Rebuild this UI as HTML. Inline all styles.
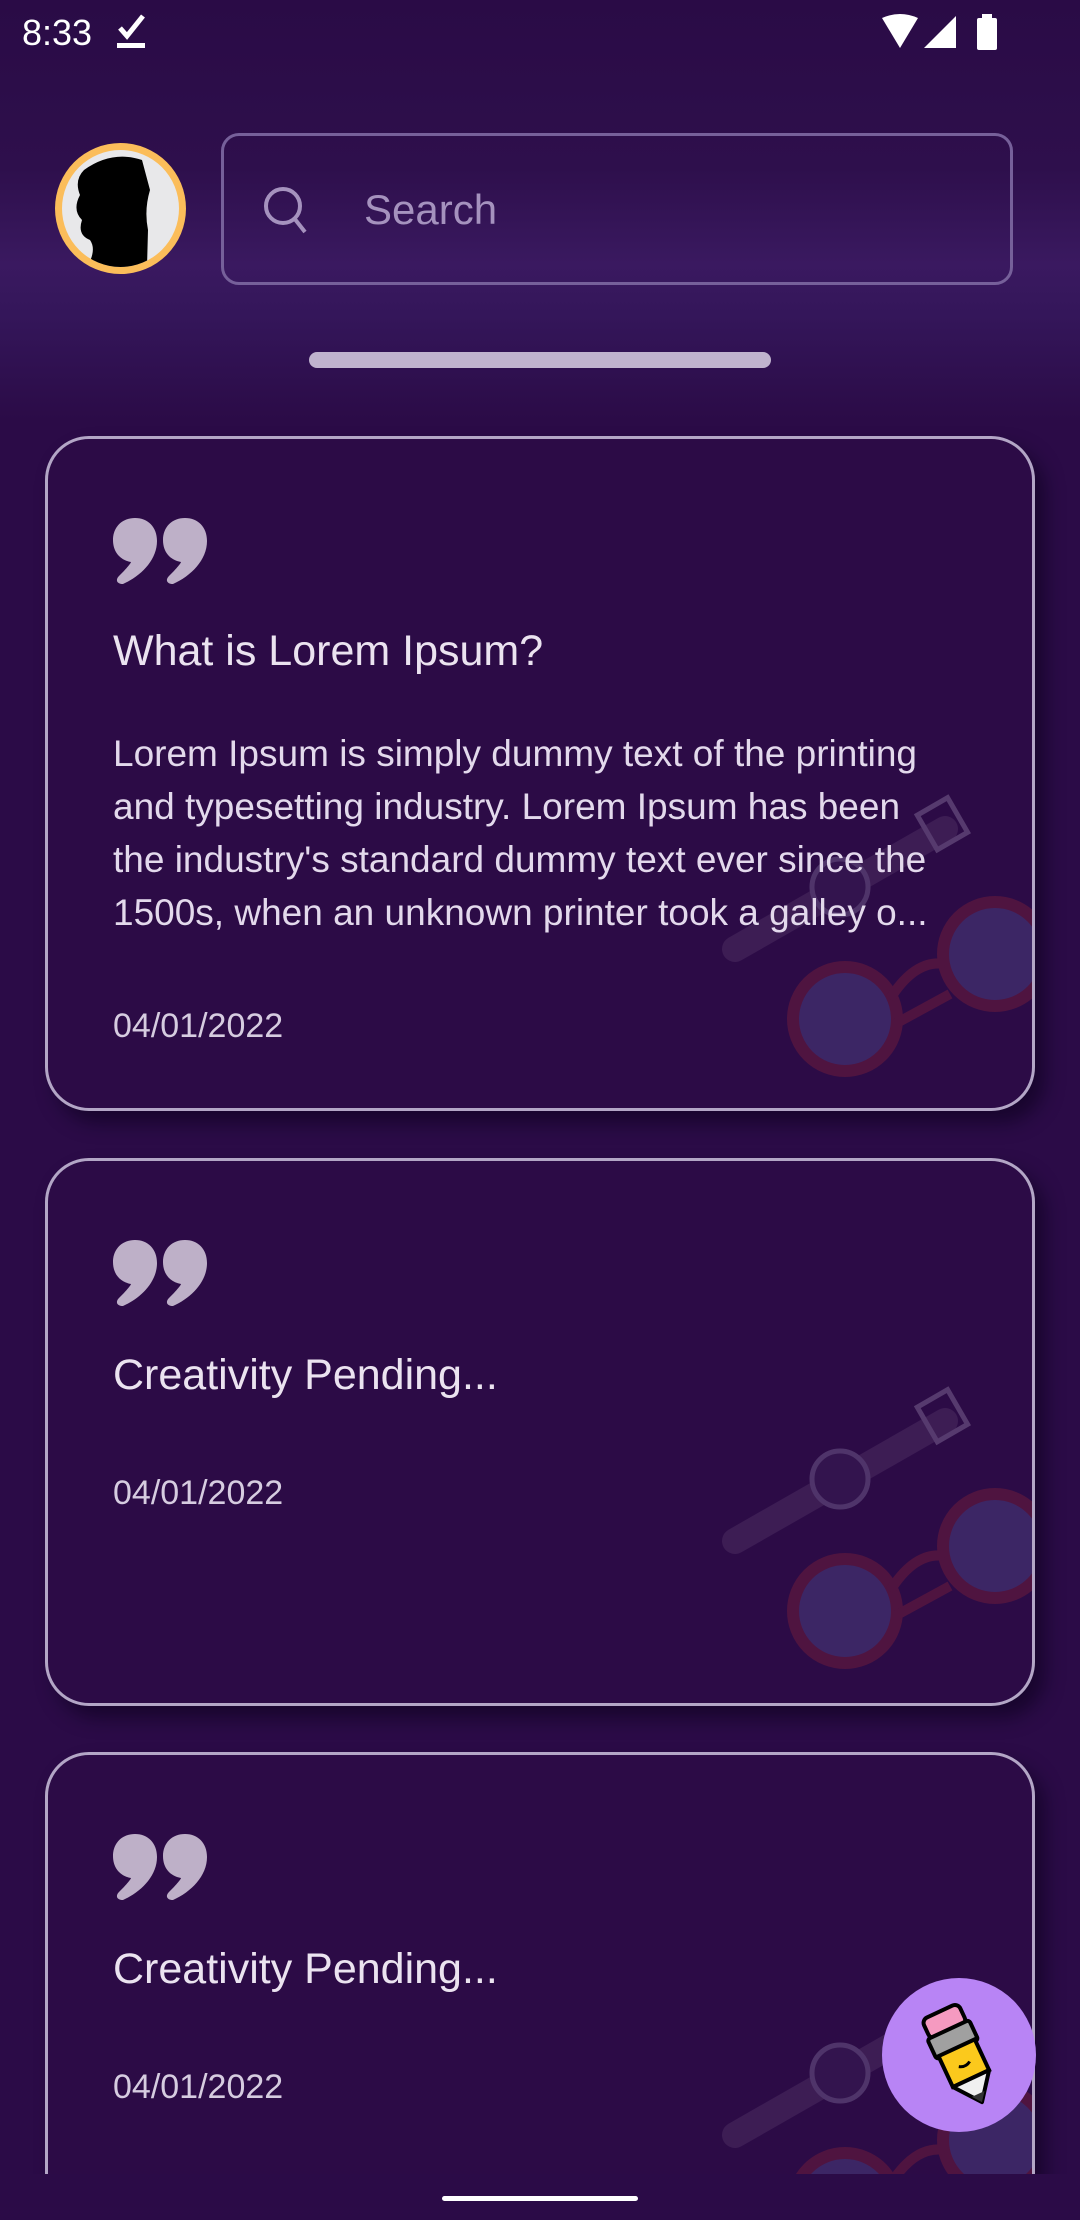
<!DOCTYPE html>
<html><head><meta charset="utf-8"><style>
*{margin:0;padding:0;box-sizing:border-box}
body{width:1080px;height:2220px;overflow:hidden;background:#2b0b47;font-family:"Liberation Sans",sans-serif;position:relative}
.hdr{position:absolute;left:0;top:0;width:1080px;height:420px;background:linear-gradient(#2a0b46 0%,#2e0f4c 40%,#3a1960 63%,#34165a 75%,#2b0b47 100%)}
.abs{position:absolute}
.clip{position:absolute;left:0;top:0;width:1080px;height:2174px;overflow:hidden}
.card{position:absolute;left:45px;width:990px;border:3px solid #b3a6c6;border-radius:44px;background:#2c0b46;box-shadow:10px 12px 18px rgba(10,0,25,.55);overflow:hidden}
.q{position:absolute;left:65px;top:79px}
.t{position:absolute;left:65px;color:#ebe3f0;font-size:43px;white-space:nowrap}
.b{position:absolute;left:65px;top:288px;color:#e3d9ec;font-size:37px;line-height:53px;white-space:nowrap}
.d{position:absolute;left:65px;color:#d6cce0;font-size:34px}
.deco{position:absolute;right:-3px;opacity:.55}
</style></head><body>
<div class="hdr"></div>
<!-- status bar -->
<div class="abs" style="left:22px;top:12px;color:#fff;font-size:36px">8:33</div>
<svg class="abs" style="left:116px;top:14px" width="32" height="38" viewBox="0 0 32 38"><path d="M4 14l7 8 16-20" stroke="#fff" stroke-width="5" fill="none"/><rect x="1" y="29" width="28" height="5" fill="#fff"/></svg>
<svg class="abs" style="left:880px;top:14px" width="120" height="38" viewBox="0 0 120 38"><path d="M2 4 Q20 -4 38 4 L20 34 Z" fill="#fff"/><path d="M44 34 L76 2 V34 Z" fill="#fff"/><rect x="97" y="4" width="20" height="32" rx="2" fill="#fff"/><rect x="102" y="0" width="10" height="6" fill="#fff"/></svg>
<!-- avatar -->
<div class="abs" style="left:55px;top:143px;width:131px;height:131px;border-radius:50%;background:#fbbd5a;padding:7px">
<div style="width:100%;height:100%;border-radius:50%;background:#e8e8ea;overflow:hidden;position:relative">
<svg width="117" height="117" viewBox="0 0 117 117" style="position:absolute;left:0;top:0"><path d="M22 20 Q50 0 80 10 L88 40 Q82 60 86 80 L85 117 H25 Q35 100 28 90 Q15 85 20 70 Q10 60 18 45 Q12 30 22 20Z" fill="#000"/></svg></div></div>
<!-- search -->
<div class="abs" style="left:221px;top:133px;width:792px;height:152px;border:3px solid #76609a;border-radius:18px"></div>
<svg class="abs" style="left:262px;top:185px" width="50" height="50" viewBox="0 0 50 50"><circle cx="21" cy="21" r="17" stroke="#a592be" stroke-width="4" fill="none"/><path d="M32 33 L43 47" stroke="#a592be" stroke-width="4"/></svg>
<div class="abs" style="left:364px;top:186px;color:#a592be;font-size:42px">Search</div>
<div class="abs" style="left:309px;top:352px;width:462px;height:16px;border-radius:8px;background:#c0b3ce"></div>

<svg width="0" height="0" style="position:absolute"><defs>
<g id="qq"><path d="M22 0 C35 0 44 9 44 23 C44 42 28 58 10 66 C4 66 2 62 6 58 C14 50 18 45 18 44 C7 42 0 34 0 22 C0 9 9 0 22 0Z" fill="#beb0c8"/></g>
<g id="dec">
<path d="M20 160 L230 40" stroke="#4b2c60" stroke-width="26" stroke-linecap="round"/>
<rect x="210" y="15" width="35" height="40" transform="rotate(-30 227 35)" fill="none" stroke="#7a6290" stroke-width="5"/>
<circle cx="125" cy="98" r="28" fill="#3a1d55" stroke="#6d5788" stroke-width="5"/>
<circle cx="130" cy="230" r="52" fill="#4a3d80" stroke="#6c1c3c" stroke-width="12"/>
<circle cx="280" cy="165" r="52" fill="#4a3d80" stroke="#6c1c3c" stroke-width="12"/>
<path d="M175 210 Q200 170 230 175" stroke="#6c1c3c" stroke-width="10" fill="none"/>
<path d="M180 235 L235 205" stroke="#6c1c3c" stroke-width="10"/>
</g></defs></svg>

<div class="clip">
<!-- card 1 -->
<div class="card" style="top:436px;height:675px">
<svg class="q" width="96" height="68" viewBox="0 0 96 68"><use href="#qq"/><use href="#qq" x="50"/></svg>
<div class="t" style="top:188px">What is Lorem Ipsum?</div>
<svg class="deco" style="top:350px" width="320" height="300" viewBox="0 0 320 300"><use href="#dec"/></svg>
<div class="b">Lorem Ipsum is simply dummy text of the printing<br>and typesetting industry. Lorem Ipsum has been<br>the industry's standard dummy text ever since the<br>1500s, when an unknown printer took a galley o...</div>
<div class="d" style="top:568px">04/01/2022</div>
</div>
<!-- card 2 -->
<div class="card" style="top:1158px;height:548px">
<svg class="q" width="96" height="68" viewBox="0 0 96 68"><use href="#qq"/><use href="#qq" x="50"/></svg>
<div class="t" style="top:190px">Creativity Pending...</div>
<div class="d" style="top:313px">04/01/2022</div>
<svg class="deco" style="top:220px" width="320" height="300" viewBox="0 0 320 300"><use href="#dec"/></svg>
</div>
<!-- card 3 -->
<div class="card" style="top:1752px;height:548px">
<svg class="q" width="96" height="68" viewBox="0 0 96 68"><use href="#qq"/><use href="#qq" x="50"/></svg>
<div class="t" style="top:190px">Creativity Pending...</div>
<div class="d" style="top:313px">04/01/2022</div>
<svg class="deco" style="top:220px" width="320" height="300" viewBox="0 0 320 300"><use href="#dec"/></svg>
</div>
</div>
<!-- bottom nav -->
<div class="abs" style="left:0;top:2174px;width:1080px;height:46px;background:#2b0b47"></div>
<div class="abs" style="left:442px;top:2196px;width:196px;height:5px;border-radius:3px;background:#fff"></div>
<!-- FAB -->
<div class="abs" style="left:882px;top:1978px;width:154px;height:154px;border-radius:50%;background:#b884f5"></div>
<svg class="abs" style="left:900px;top:1995px" width="120" height="120" viewBox="0 0 120 120">
<g transform="rotate(-25 60 60)">
<rect x="40" y="12" width="40" height="22" rx="6" fill="#f59ac0" stroke="#000" stroke-width="4"/>
<rect x="37" y="32" width="46" height="22" rx="3" fill="#a0a0a0" stroke="#000" stroke-width="4"/>
<rect x="40" y="52" width="40" height="34" fill="#fbc91c" stroke="#000" stroke-width="4"/>
<path d="M40 86 L60 112 L80 86 Z" fill="#f0f0f0" stroke="#000" stroke-width="4" stroke-linejoin="round"/>
<path d="M53 103 L60 112 L67 103Z" fill="#333"/>
<path d="M54 70 Q60 74 66 70" stroke="#000" stroke-width="3" fill="none"/>
</g></svg>
</body></html>
